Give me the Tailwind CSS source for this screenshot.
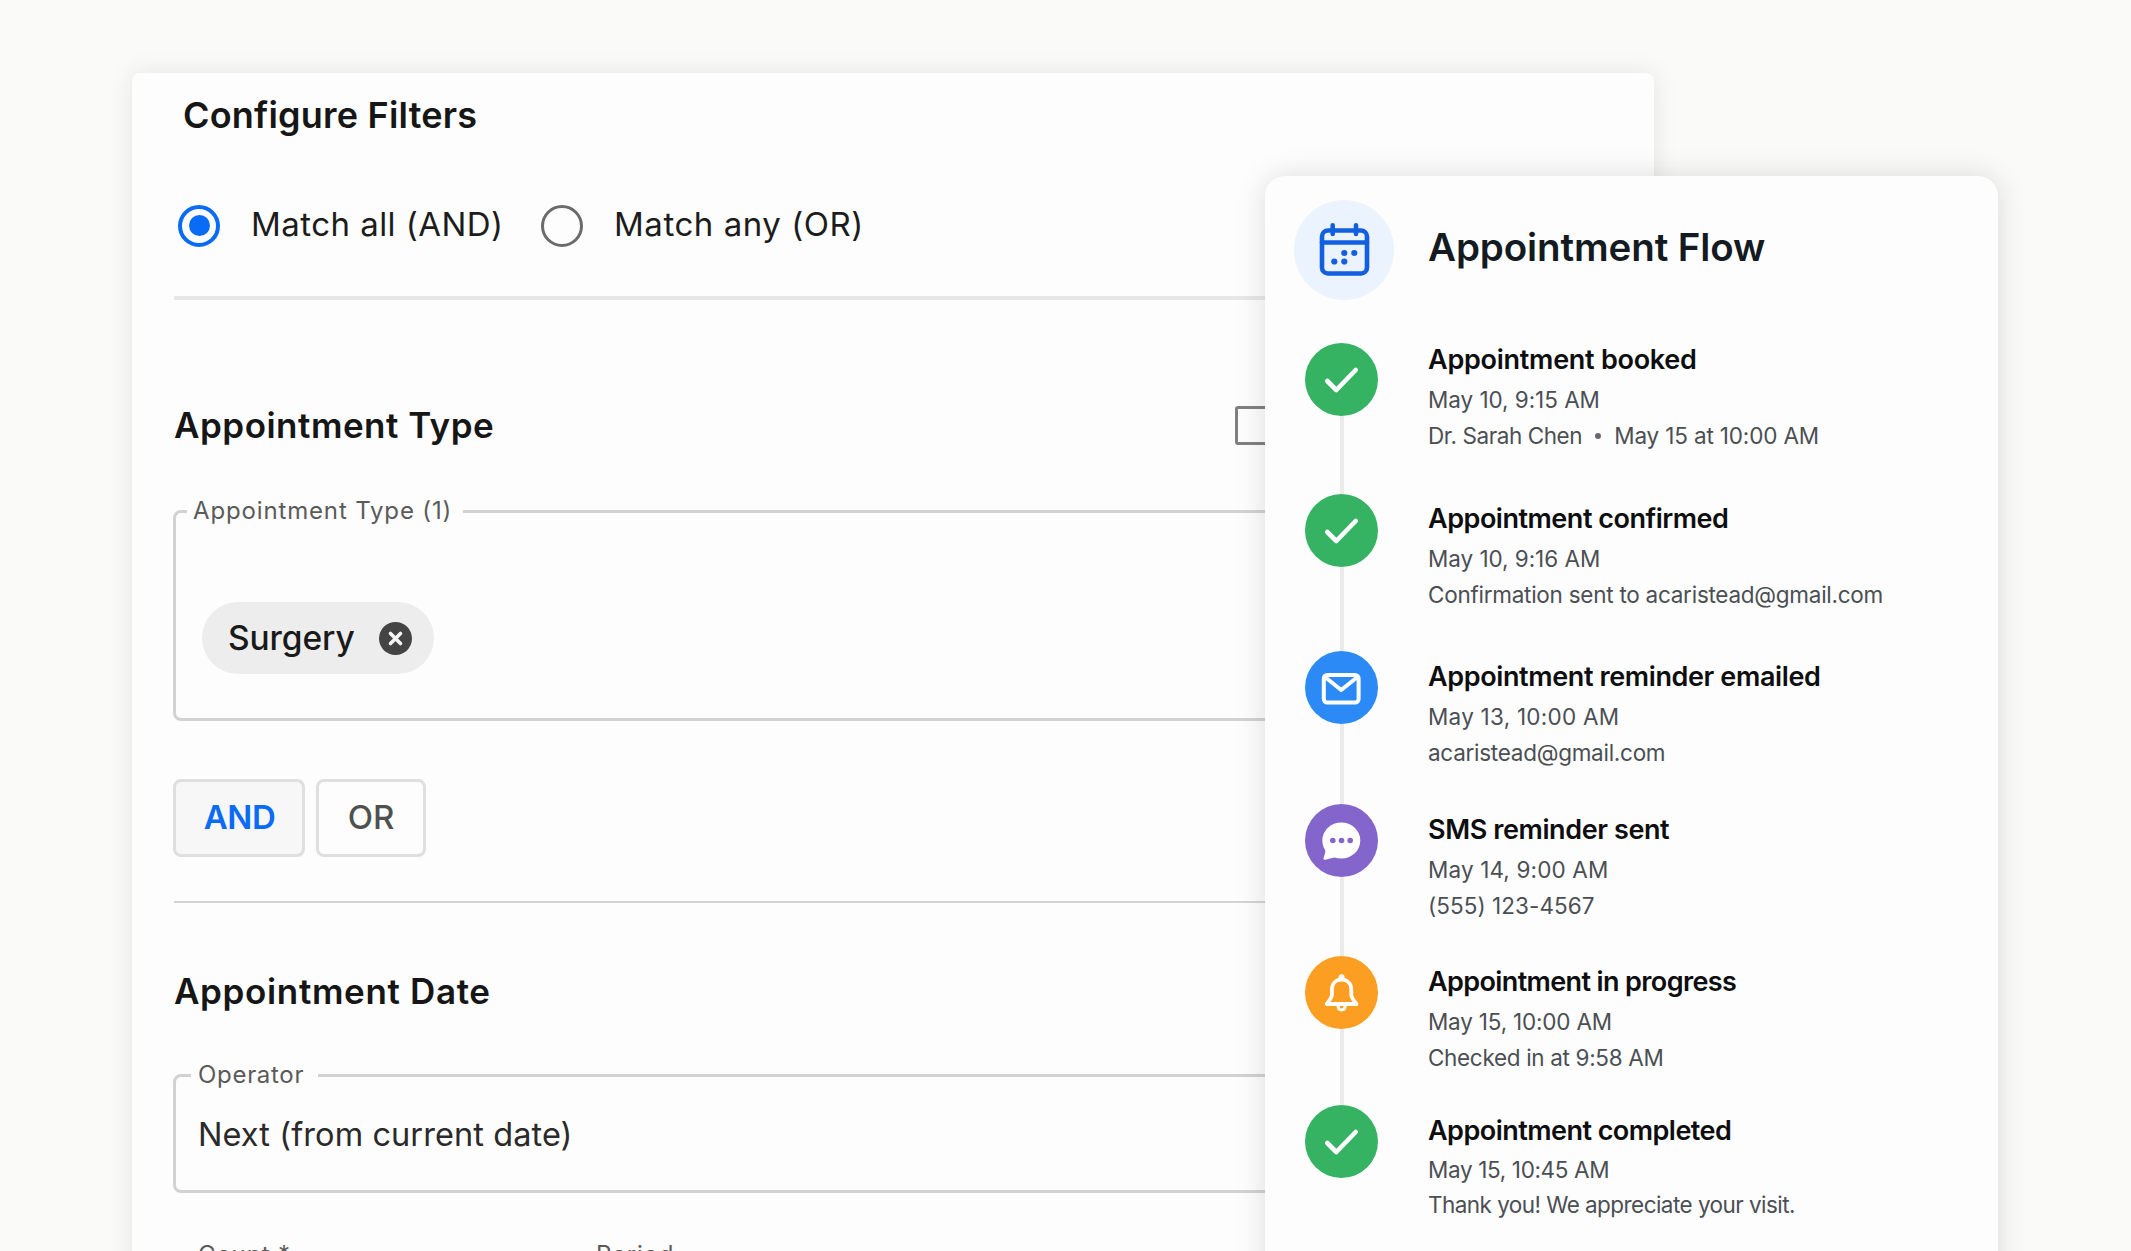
<!DOCTYPE html>
<html lang="en">
<head>
  <meta charset="UTF-8">
  <title>Appointment Flow - Configure Filters</title>
  <!-- Tailwind CSS CDN -->
  <script src="https://cdn.jsdelivr.net/npm/@tailwindcss/browser@4"></script>
</head>
<body class="relative w-[2131px] h-[1251px] overflow-hidden bg-[#fafaf8] font-[Inter,sans-serif]">

  <!-- Filters Panel -->
  <main class="ml-[132px] mt-[73px] w-[1522px] h-[1300px] rounded-lg bg-[#fdfdfd] pl-[42px] pr-10 pt-5 shadow-[0_0_26px_rgba(0,0,0,0.09)]">
    <h1 class="ml-[9px] text-[36px] leading-[44px] font-semibold tracking-[0.2px] text-[#161616]">Configure Filters</h1>

    <!-- Match Mode -->
    <div class="mt-[67px] h-[43px] flex items-center text-[33px] leading-[40px] text-[#1c1c1c]">
      <span class="ml-1 w-[42px] h-[42px] rounded-full border-4 border-[#0a6cf5] flex items-center justify-center">
        <span class="w-[21px] h-[21px] rounded-full bg-[#0a6cf5]"></span>
      </span>
      <span class="ml-[31px] w-[290px] pb-[3px] tracking-[0.45px] whitespace-nowrap">Match all (AND)</span>
      <span class="w-[42px] h-[42px] rounded-full border-[3.5px] border-[#6b6b6b]"></span>
      <span class="ml-[31px] pb-[3px] tracking-[0.53px] whitespace-nowrap">Match any (OR)</span>
    </div>
    <div class="mt-[49px] h-1 bg-[#e7e7e7]"></div>

    <!-- Appointment Type -->
    <section>
      <div class="mt-[103px] h-[44px] flex items-center">
        <h2 class="w-[1061px] text-[35px] leading-[44px] font-semibold tracking-[0.5px] text-[#161616]">Appointment Type</h2>
        <span class="mt-px w-[39px] h-[39px] rounded-[3px] border-[3px] border-[#808080]"></span>
      </div>
      <fieldset class="-ml-px mt-[52px] h-[222px] rounded-lg border-[3px] border-[#d2d2d2] pl-[11px]">
        <legend class="w-[276px] pl-[6px] text-[24px] leading-[24px] tracking-[0.85px] text-[#5a5a5a] whitespace-nowrap">Appointment Type (1)</legend>
        <div class="ml-[15px] mt-[79px] w-[232px] h-[72px] rounded-full bg-[#ededed] flex items-center pl-[26px] text-[#1a1a1a]">
          <span class="w-[150px] pb-px text-[33.5px] leading-[40px] font-medium tracking-[-0.1px]">Surgery</span>
          <svg class="w-[35px] h-[35px]" viewBox="0 0 35 35">
            <circle cx="17.5" cy="17.5" r="16.5" fill="#444444"/>
            <path d="M12.5 12.500l10 10M22.500 12.500l-10 10" stroke="#f4f4f4" stroke-width="3.6" stroke-linecap="round"/>
          </svg>
        </div>
      </fieldset>
      <div class="-ml-px mt-[58px] flex gap-[11px]">
        <button class="w-[132px] h-[78px] rounded-lg border-[3px] border-[#dfdfdf] bg-[#f7f7f7] pl-px text-[33px] font-semibold tracking-[-0.4px] text-[#0a6cf5]">AND</button>
        <button class="w-[110px] h-[78px] rounded-lg border-[3px] border-[#dfdfdf] bg-[#fdfdfd] text-[33px] font-medium text-[#505050]">OR</button>
      </div>
    </section>
    <div class="mt-[44px] h-[2px] bg-[#d4d4d4]"></div>

    <!-- Appointment Date -->
    <section>
      <h2 class="mt-[66px] text-[35px] leading-[44px] font-semibold tracking-[0.65px] text-[#161616]">Appointment Date</h2>
      <fieldset class="-ml-px mt-[50px] h-[130px] rounded-lg border-[3px] border-[#d2d2d2] pl-[15px]">
        <legend class="w-[127px] pl-[7px] text-[24px] leading-[24px] tracking-[0.7px] text-[#5a5a5a]">Operator</legend>
        <div class="ml-[7px] mt-[28px] text-[32.5px] leading-[40px] tracking-[0.08px] text-[#2a2a2a]">Next (from current date)</div>
      </fieldset>
      <div class="-ml-px mt-[50px] flex gap-5">
        <fieldset class="w-[378px] h-[131px] rounded-lg border-[3px] border-[#d2d2d2] pl-[15px]">
          <legend class="w-[112px] pl-[7px] text-[24px] leading-[24px] tracking-[0.85px] text-[#5a5a5a]">Count *</legend>
        </fieldset>
        <fieldset class="w-[378px] h-[131px] rounded-lg border-[3px] border-[#d2d2d2] pl-[15px]">
          <legend class="w-[98px] pl-[7px] text-[24px] leading-[24px] tracking-[0.8px] text-[#5a5a5a]">Period</legend>
        </fieldset>
      </div>
    </section>
  </main>

  <!-- Appointment Flow Card, floats over the panel -->
  <aside class="absolute left-[1265px] top-[176px] w-[733px] h-[1200px] rounded-[20px] bg-[#fdfdfd] shadow-[0_0_30px_rgba(0,0,0,0.13)]">
    <header class="pl-[29px] pt-6 flex items-center">
      <div class="w-[100px] h-[100px] rounded-full bg-[#ebf3fe] flex items-center justify-center">
        <svg class="w-[52px] h-[56px]" viewBox="0 0 52 56" fill="none" stroke="#1260e0" stroke-width="4.6" stroke-linecap="round">
          <rect x="4" y="8.500" width="45" height="43" rx="6"/>
          <path d="M4 20.500h45M14.700 3.300v8.600M38 3.300v8.600"/>
          <g fill="#1260e0" stroke="none">
            <circle cx="26.300" cy="31" r="3.100"/>
            <circle cx="36.300" cy="31" r="3.100"/>
            <circle cx="16.300" cy="39.500" r="3.100"/>
            <circle cx="26.300" cy="39.500" r="3.100"/>
          </g>
        </svg>
      </div>
      <h2 class="ml-[34px] pb-[6px] text-[38.5px] leading-[48px] font-semibold tracking-[-0.1px] text-[#141a22]">Appointment Flow</h2>
    </header>

    <!-- Timeline -->
    <ol class="mt-[43px] pl-10 text-[22.5px] leading-[36px] text-[#4b4f54] whitespace-nowrap">
      <li class="h-[151px] flex">
        <div class="w-[73px] flex flex-col items-center">
          <svg class="w-[73px] h-[73px] shrink-0" viewBox="0 0 73 73">
            <circle cx="36.5" cy="36.5" r="36.5" fill="#36b263"/>
            <path d="M22.300 38l9 9 19.400-20" fill="none" stroke="#fff" stroke-width="4.6" stroke-linecap="round" stroke-linejoin="round"/>
          </svg>
          <div class="w-1 flex-1 bg-[#ebebeb]"></div>
        </div>
        <div class="ml-[50px] -mt-px">
          <h3 class="mb-1 text-[27px] leading-[36px] font-semibold tracking-[-0.26px] text-[#0e0e10]">Appointment booked</h3>
          <p class="tracking-[-0.05px]">May 10, 9:15 AM</p>
          <p class="flex items-center">
            <span class="tracking-[-0.42px]">Dr. Sarah Chen</span>
            <span class="mx-[13px] w-[6px] h-[6px] rounded-full bg-[#666a6f]"></span>
            <span class="tracking-[-0.15px]">May 15 at 10:00 AM</span>
          </p>
        </div>
      </li>
      <li class="h-[157px] flex">
        <div class="w-[73px] flex flex-col items-center">
          <svg class="w-[73px] h-[73px] shrink-0" viewBox="0 0 73 73">
            <circle cx="36.5" cy="36.5" r="36.5" fill="#36b263"/>
            <path d="M22.300 38l9 9 19.400-20" fill="none" stroke="#fff" stroke-width="4.6" stroke-linecap="round" stroke-linejoin="round"/>
          </svg>
          <div class="w-1 flex-1 bg-[#ebebeb]"></div>
        </div>
        <div class="ml-[50px] mt-[7px]">
          <h3 class="mb-1 text-[27px] leading-[36px] font-semibold tracking-[-0.48px] text-[#0e0e10]">Appointment confirmed</h3>
          <p class="tracking-[-0.05px]">May 10, 9:16 AM</p>
          <p class="tracking-[-0.26px]">Confirmation sent to acaristead@gmail.com</p>
        </div>
      </li>
      <li class="h-[153px] flex">
        <div class="w-[73px] flex flex-col items-center">
          <svg class="w-[73px] h-[73px] shrink-0" viewBox="0 0 73 73">
            <circle cx="36.5" cy="36.5" r="36.5" fill="#2b8af6"/>
            <g fill="none" stroke="#fff" stroke-width="4" stroke-linejoin="round">
              <rect x="18.800" y="24" width="34.800" height="27.500" rx="3.500"/>
              <path d="M20 26l16.200 13L52.500 26"/>
            </g>
          </svg>
          <div class="w-1 flex-1 bg-[#ebebeb]"></div>
        </div>
        <div class="ml-[50px] mt-[8px]">
          <h3 class="mb-1 text-[27px] leading-[36px] font-semibold tracking-[-0.38px] text-[#0e0e10]">Appointment reminder emailed</h3>
          <p class="tracking-[0.25px]">May 13, 10:00 AM</p>
          <p class="tracking-[-0.27px] leading-[35px]">acaristead@gmail.com</p>
        </div>
      </li>
      <li class="h-[152px] flex">
        <div class="w-[73px] flex flex-col items-center">
          <svg class="w-[73px] h-[73px] shrink-0" viewBox="0 0 73 73">
            <circle cx="36.5" cy="36.5" r="36.5" fill="#8465cc"/>
            <ellipse cx="36.300" cy="36.500" rx="19" ry="18" fill="#fff"/>
            <path d="M20.500 43c.300 3.500-.400 7-1.900 10.800-.500 1.300.400 2.200 1.700 1.900L31 53z" fill="#fff"/>
            <g fill="#8465cc">
              <circle cx="27.800" cy="36.500" r="2.800"/>
              <circle cx="36.500" cy="36.500" r="2.800"/>
              <circle cx="45.200" cy="36.500" r="2.800"/>
            </g>
          </svg>
          <div class="w-1 flex-1 bg-[#ebebeb]"></div>
        </div>
        <div class="ml-[50px] mt-[8px]">
          <h3 class="mb-1 text-[27px] leading-[36px] font-semibold tracking-[-0.4px] text-[#0e0e10]">SMS reminder sent</h3>
          <p class="tracking-[0.14px]">May 14, 9:00 AM</p>
          <p class="tracking-[0.05px] leading-[35px]">(555) 123-4567</p>
        </div>
      </li>
      <li class="h-[149px] flex">
        <div class="w-[73px] flex flex-col items-center">
          <svg class="w-[73px] h-[73px] shrink-0" viewBox="0 0 73 73">
            <circle cx="36.5" cy="36.5" r="36.5" fill="#fb9e22"/>
            <circle cx="36.600" cy="21.300" r="3" fill="#fff"/>
            <g fill="none" stroke="#fff" stroke-width="3.8" stroke-linecap="round" stroke-linejoin="round">
              <path d="M36.600 23.700c-6 0-9.700 4-9.700 10v5c0 3.200-2.400 5.300-5.200 9.300h29.800c-2.800-4-5.200-6.100-5.200-9.300v-5c0-6-3.700-10-9.700-10z"/>
              <path d="M33 49.500c.200 6 7 6 7.200 0" stroke-width="3"/>
            </g>
          </svg>
          <div class="w-1 flex-1 bg-[#ebebeb]"></div>
        </div>
        <div class="ml-[50px] mt-[8px]">
          <h3 class="mb-1 text-[27px] leading-[36px] font-semibold tracking-[-0.62px] text-[#0e0e10]">Appointment in progress</h3>
          <p class="tracking-[-0.2px]">May 15, 10:00 AM</p>
          <p class="tracking-[-0.33px] leading-[35px]">Checked in at 9:58 AM</p>
        </div>
      </li>
      <li class="flex">
        <svg class="w-[73px] h-[73px] shrink-0" viewBox="0 0 73 73">
          <circle cx="36.5" cy="36.5" r="36.5" fill="#36b263"/>
          <path d="M22.300 38l9 9 19.400-20" fill="none" stroke="#fff" stroke-width="4.6" stroke-linecap="round" stroke-linejoin="round"/>
        </svg>
        <div class="ml-[50px] mt-[8px]">
          <h3 class="mb-[3px] text-[27px] leading-[36px] font-semibold tracking-[-0.53px] text-[#0e0e10]">Appointment completed</h3>
          <p class="tracking-[-0.35px]">May 15, 10:45 AM</p>
          <p class="tracking-[-0.55px] leading-[34px]">Thank you! We appreciate your visit.</p>
        </div>
      </li>
    </ol>
  </aside>

</body>
</html>
